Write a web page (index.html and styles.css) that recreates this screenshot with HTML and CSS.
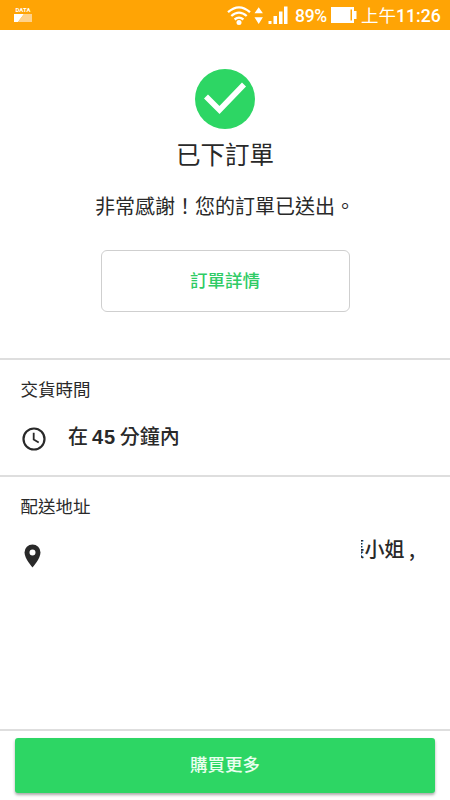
FILE: index.html
```html
<!DOCTYPE html>
<html lang="zh-Hant">
<head>
<meta charset="utf-8">
<title>已下訂單</title>
<link rel="stylesheet" href="styles.css">
</head>
<body>
<div class="screen">
  <header class="status">
    <div class="data"><span>DATA</span>
      <svg width="18" height="8" viewBox="0 0 18 8"><path fill="#fff" d="M0 0h10L4 8H0z"/><path fill="#ffd28a" d="M10 0h8v8H4z"/></svg>
    </div>
    <svg class="signals" width="64" height="24" viewBox="226 3 64 24">
      <g fill="none" stroke="#fff" stroke-width="2.3"><path d="M228 12.2Q239 2.5 250 12.2M231.3 16Q239 9.2 246.700 16M234.600 19.500Q239 15.800 243.400 19.500"/></g>
      <circle cx="239" cy="22.600" r="2.500" fill="#fff"/>
      <path fill="#fff" d="M254.500 13.200l4.200-6 4.200 6zM254.500 17.200l4.200 6.800 4.200-6.800zM268.500 21h3v3h-3zM273.500 16h3.500v8h-3.500zM279 11.500h3.500v12.500H279zM284 6.500h3.500v17.500H284z"/>
    </svg>
    <span class="percent">89%</span>
    <svg class="battery" width="26" height="18" viewBox="0 0 26 18"><path fill="#fff" d="M0 1h23v4h2.500v8H23v4H0z"/><path fill="#ffa405" d="M19.500 3.500h1.500v11h-1.500z"/></svg>
    <span class="time">上午<b>11:26</b></span>
  </header>
  <main>
    <section class="summary">
      <svg class="check" width="60" height="60" viewBox="0 0 60 60"><circle cx="30" cy="30" r="30" fill="#2dd664"/><path d="M11 27.500L24.500 41L49 15.500" fill="none" stroke="#fff" stroke-width="5.600"/></svg>
      <h1>已下訂單</h1>
      <p>非常感謝！您的訂單已送出。</p>
      <button class="details">訂單詳情</button>
    </section>
    <section class="info time-info">
      <h2>交貨時間</h2>
      <div class="row">
        <svg width="24" height="24" viewBox="0 0 24 24" fill="none" stroke="#292929" stroke-width="2.200"><circle cx="12" cy="12" r="10.500"/><path d="M11.700 5.800v6.800l5 3" stroke-width="1.800"/></svg>
        <span class="value">在 <b>45</b> 分鐘內</span>
      </div>
    </section>
    <section class="info address-info">
      <h2>配送地址</h2>
      <div class="row">
        <svg class="pin" width="17" height="24" viewBox="0 0 17 24"><path fill="#292929" fill-rule="evenodd" d="M8.500 0.500A8 8 0 0 0 .5 8.500C.5 14.500 8.500 23.500 8.500 23.500S16.500 14.500 16.500 8.500A8 8 0 0 0 8.500.5zM8.500 5.600a3 3 0 1 1 0 6 3 3 0 0 1 0-6z"/></svg>
        <span class="person"><span class="surname">張</span>小姐 ,</span>
      </div>
    </section>
  </main>
  <footer><button class="more">購買更多</button></footer>
</div>
</body>
</html>
```

FILE: styles.css
```css
* { box-sizing: border-box; }
body {
  margin: 0;
  background: #fff;
  color: #292929;
  font-family: "Noto Sans CJK TC", sans-serif;
}
svg { display: block; flex: none; }
h1, h2, p { margin: 0; font-weight: 400; }
button { font-family: inherit; padding: 0; cursor: pointer; }
.screen { width: 450px; height: 800px; display: flex; flex-direction: column; overflow: hidden; }

.status {
  height: 30px;
  flex: none;
  display: flex;
  align-items: center;
  background: #ffa405;
  color: #fff;
  white-space: nowrap;
}
.data { width: 18px; margin-left: 14px; margin-right: 194px; padding-bottom: 3px; }
.data span { display: block; font: 700 6px/7px Roboto, sans-serif; text-align: center; margin-bottom: 1px; }
.signals { margin-right: 5px; }
.percent { width: 33px; font: 500 17.5px/30px Roboto, sans-serif; letter-spacing: -0.3px; padding-top: 2px; }
.battery { margin-left: 3px; margin-right: 4px; }
.time { font-size: 17.5px; line-height: 30px; }
.time b { font: 500 17.7px/30px Roboto, sans-serif; }

main { flex: 1; }
.summary {
  height: 330px;
  padding-top: 39px;
  display: flex;
  flex-direction: column;
  align-items: center;
  border-bottom: 2px solid #dedede;
}
h1 { margin-top: 7px; font-size: 24.5px; line-height: 36px; }
p { margin-top: 19px; font-size: 20px; line-height: 30px; }
.details {
  width: 249px;
  height: 62px;
  margin-top: 29px;
  padding-bottom: 4px;
  border: 1px solid #cfcfcf;
  border-radius: 6px;
  background: #fff;
  color: #2fcb65;
  font-size: 17.5px;
  font-weight: 500;
}
.info { height: 117px; padding: 16px 20px 0 20.5px; }
.time-info { border-bottom: 2px solid #dedede; }
.info h2 { font-size: 17.5px; line-height: 26px; }
.row { display: flex; align-items: center; height: 30px; margin-top: 22px; padding-left: 1.5px; }
.value { margin-left: 22px; padding-bottom: 6px; font-size: 20px; line-height: 26px; font-weight: 500; word-spacing: -0.5px; }
.value b { font-family: "Liberation Sans", sans-serif; font-weight: 700; letter-spacing: 0.8px; }
.pin { margin-left: 2px; margin-top: 3px; }
.address-info .row { align-items: flex-start; }
.person { display: flex; margin-left: auto; margin-right: 15px; margin-top: -5px; font-size: 20px; line-height: 26px; font-weight: 500; white-space: pre; }
.surname { width: 4px; display: flex; justify-content: flex-end; overflow: hidden; }

footer { height: 71px; border-top: 2px solid #dedede; padding: 7px 15px 0; }
.more {
  display: block;
  width: 420px;
  height: 55px;
  padding-bottom: 5px;
  border: 0;
  border-radius: 3px;
  background: #2dd664;
  color: #e9ffef;
  font-size: 17.5px;
  font-weight: 500;
  box-shadow: 0 2px 3px #aaa;
}
```
